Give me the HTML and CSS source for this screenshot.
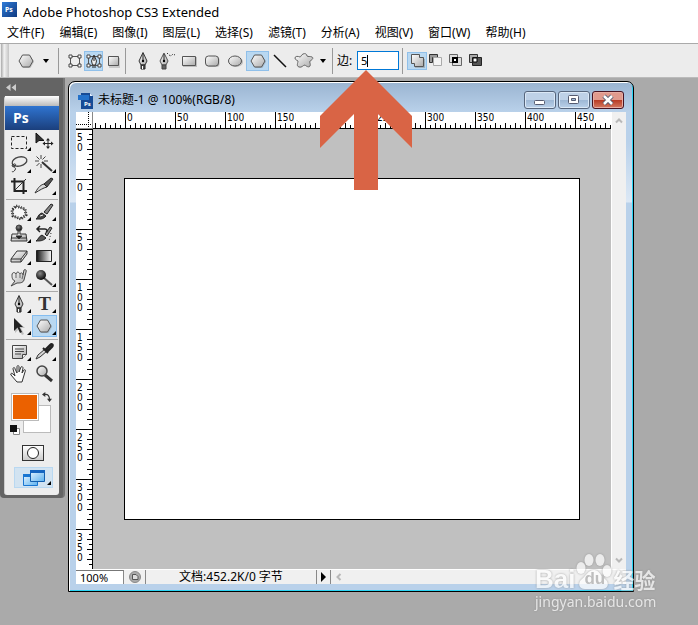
FILE: index.html
```html
<!DOCTYPE html>
<html lang="zh-CN">
<head>
<meta charset="utf-8">
<title>Adobe Photoshop CS3 Extended</title>
<link rel="stylesheet" href="styles.css">
</head>
<body>
<svg class="sprite" aria-hidden="true">
  <defs>
    <linearGradient id="metal" x1="0" y1="0" x2="1" y2="1"><stop offset="0" stop-color="#fff"/><stop offset="1" stop-color="#aaa"/></linearGradient>
    <linearGradient id="dark" x1="0" y1="0" x2="1" y2="0"><stop offset="0" stop-color="#111"/><stop offset="1" stop-color="#fff"/></linearGradient>
    <linearGradient id="blue" x1="0" y1="0" x2="1" y2="1"><stop offset="0" stop-color="#2f7bd8"/><stop offset="1" stop-color="#103a80"/></linearGradient>
    <linearGradient id="screen" x1="0" y1="0" x2="1" y2="1"><stop offset="0" stop-color="#e8f5ff"/><stop offset="1" stop-color="#5db2ef"/></linearGradient>
    <radialGradient id="ball" cx=".4" cy=".35" r=".6"><stop offset="0" stop-color="#888"/><stop offset="1" stop-color="#111"/></radialGradient>
  </defs>
  <symbol id="hex" viewBox="0 0 20 20"><path d="M6.500 4h7l3.500 6-3.500 6h-7L3 10z" fill="#888" opacity=".35" transform="translate(1 1)"/><path d="M6.500 4h7l3.500 6-3.500 6h-7L3 10z" fill="url(#metal)" stroke="#555"/></symbol>
  <symbol id="shape-layer" viewBox="0 0 20 20"><path d="M5.500 5.500h9v9h-9z" fill="#eee" stroke="#555"/><path d="M4 4h3v3H4zM13 4h3v3h-3zM4 13h3v3H4zM13 13h3v3h-3z" fill="#fff" stroke="#444"/></symbol>
  <symbol id="path-mode" viewBox="0 0 20 20"><path d="M4.500 5.500h11v9h-11z" fill="none" stroke="#555"/><path d="M3 4h3v3H3zM14 4h3v3h-3zM3 13h3v3H3zM14 13h3v3h-3z" fill="#fff" stroke="#444"/><path d="M10 4l-2.500 6 1 4h3l1-4z" fill="#eee" stroke="#333"/><path d="M10 5v5M8 16h4" stroke="#222"/></symbol>
  <symbol id="pixels" viewBox="0 0 20 20"><path d="M6 7h11v10H6z" fill="#777" opacity=".3"/><path d="M5.500 5.500h10v9h-10z" fill="url(#metal)" stroke="#555"/></symbol>
  <symbol id="pen" viewBox="0 0 20 20"><path d="M10 1.500L6 10l2 4h4l2-4z" fill="url(#metal)" stroke="#333"/><path d="M10 3v6" stroke="#222"/><circle cx="10" cy="10" r="1.200"/><path d="M8 14h4v4H8z" fill="#555" stroke="#222"/><path d="M9.500 15v3" stroke="#fff"/></symbol>
  <symbol id="free-pen" viewBox="0 0 20 20"><path d="M8 2L4 10l2 4h4l2-4z" fill="url(#metal)" stroke="#555"/><path d="M8 3v6" stroke="#222"/><circle cx="8" cy="10" r="1.200"/><path d="M6 14h4v4H6z" fill="#666" stroke="#444"/><path d="M11 2l2 2 2 1 2-2 2 1" fill="none" stroke="#333" stroke-dasharray="1.500 1.500"/></symbol>
  <symbol id="rect" viewBox="0 0 20 20"><path d="M4 6h14v10H4z" fill="#777" opacity=".4"/><path d="M3.500 5.500h13v9h-13z" fill="url(#metal)" stroke="#555"/></symbol>
  <symbol id="rrect" viewBox="0 0 20 20"><rect x="4.500" y="6" width="13" height="10" rx="3" fill="#777" opacity=".4"/><rect x="3.500" y="5" width="13" height="10" rx="3" fill="url(#metal)" stroke="#555"/></symbol>
  <symbol id="oval" viewBox="0 0 20 20"><ellipse cx="11" cy="11" rx="7" ry="5" fill="#777" opacity=".4"/><ellipse cx="10" cy="10" rx="6.500" ry="5" fill="url(#metal)" stroke="#555"/></symbol>
  <symbol id="line" viewBox="0 0 20 20"><path d="M3 4l12 12" stroke="#111" stroke-width="1.500"/></symbol>
  <symbol id="blob" viewBox="0 0 20 20"><path d="M9 3c2-1 4 0 4 2 1 1 3 0 5 1s0 3-2 4c-1 1 1 3 0 5s-4 0-5-1c-2 0-3 3-6 2s-1-4-1-6c-1-1-3-1-3-3s3-2 5-1c1 0 1-2 3-3z" fill="url(#metal)" stroke="#666"/></symbol>
  <symbol id="op-add" viewBox="0 0 20 20"><path d="M4.500 3.500h8v3h4v9h-9v-3h-3z" fill="url(#metal)" stroke="#555"/><path d="M8 16.500h9.500V8" fill="none" stroke="#888" opacity=".5"/></symbol>
  <symbol id="op-sub" viewBox="0 0 20 20"><path d="M2.500 3.500h8v3h-5v5h-3z" fill="#999" stroke="#333"/><path d="M6.500 6.500h8v8h-8z" fill="#f4f4f4" stroke="#aaa"/></symbol>
  <symbol id="op-int" viewBox="0 0 20 20"><path d="M2.500 3.500h8v8h-8zM5.500 6.500h9v8h-9z" fill="#ddd" stroke="#666"/><path d="M6 7h4v4H6z" fill="#fff" stroke="#000" stroke-width="2"/></symbol>
  <symbol id="op-xor" viewBox="0 0 20 20"><path d="M2.500 3.500h8v8h-8z" fill="#aaa" stroke="#333"/><path d="M5.500 6.500h9v8h-9z" fill="#555" stroke="#222"/><path d="M6 7h4v4H6z" fill="#fff" stroke="#000"/></symbol>
  <symbol id="marquee" viewBox="0 0 20 20"><path d="M2.500 4.500h15v12h-15z" fill="none" stroke="#222" stroke-dasharray="3 2"/></symbol>
  <symbol id="move" viewBox="0 0 20 20"><path d="M2 1v10l3-2.500h5z" fill="#333" stroke="#111"/><path d="M14 7v9M9.500 11.500h9" stroke="#222"/><path d="M14 6l-2 2.500h4zM14 17l-2-2.500h4zM8.500 11.500L11 9.500v4zM19.500 11.500L17 9.500v4z" fill="#222"/></symbol>
  <symbol id="lasso" viewBox="0 0 20 20"><ellipse cx="10.500" cy="7.500" rx="7.500" ry="4.500" transform="rotate(-14 10.500 7.500)" fill="none" stroke="#444" stroke-width="1.300"/><path d="M4 10c-2 2 0 4 2 2s-1-3-2-1 4 2 2 5-3 1-3 2" fill="none" stroke="#333"/></symbol>
  <symbol id="wand" viewBox="0 0 20 20"><path d="M8 8l10 9" stroke="#333" stroke-width="2"/><path d="M7 1v4M7 10v4M1 7h4M10 7h4M2.500 2.500l3 3M11.500 2.500l-3 3M2.500 12l3-3" stroke="#444"/></symbol>
  <symbol id="crop" viewBox="0 0 20 20"><path d="M5.500 2v13H18M2 5.500h12.500V18" fill="none" stroke="#222" stroke-width="2"/><path d="M5.500 14.500L17 3" stroke="#333"/></symbol>
  <symbol id="slice" viewBox="0 0 20 20"><path d="M1 17C5 10 7 9 10 8l3 3c-4 1-7 3-12 6z" fill="url(#metal)" stroke="#333"/><path d="M10 8l7-6 2 1-6 8z" fill="#555" stroke="#222"/></symbol>
  <symbol id="heal" viewBox="0 0 20 20"><path d="M7 4l9 3 1 6-5 4-8-3-1-6z" fill="#f6f6f6" stroke="#222" stroke-width="3" stroke-dasharray="1 1.500"/><path d="M7 4l9 3 1 6-5 4-8-3-1-6z" fill="none" stroke="#666"/></symbol>
  <symbol id="brush" viewBox="0 0 20 20"><path d="M10 10l7-8 2 1-6 9z" fill="#888" stroke="#222"/><path d="M2 17c2-1 2-5 6-6l4 3c-3 4-7 3-10 3z" fill="#444" stroke="#222"/><path d="M6 14l3-1" stroke="#eee"/></symbol>
  <symbol id="stamp" viewBox="0 0 20 20"><circle cx="10" cy="4" r="3" fill="url(#ball)" stroke="#444"/><path d="M9 7h2v3h6l1 7H2l1-7h6z" fill="url(#metal)" stroke="#333"/><path d="M2 14h16M7 12h6l-3 3z" stroke="#333" fill="#111"/></symbol>
  <symbol id="history" viewBox="0 0 20 20"><path d="M11 10l5-7 2 1-5 8z" fill="#888" stroke="#222"/><path d="M2 17c2-1 3-5 6-6l4 3c-3 3-6 3-10 3z" fill="#555" stroke="#222"/><path d="M4 5h7c2 0 3 2 1 3M6 2L3 5l3 3" fill="none" stroke="#222" stroke-width="1.500"/><path d="M17 9l-2 8" stroke="#222" stroke-dasharray="1 2"/></symbol>
  <symbol id="eraser" viewBox="0 0 20 20"><path d="M2 13l6-8h10l-6 8zM2 13v3h10v-3M12 16l6-8V5" fill="url(#metal)" stroke="#333"/></symbol>
  <symbol id="gradient" viewBox="0 0 20 20"><path d="M2.500 4.500h15v11h-15z" fill="url(#dark)" stroke="#222"/></symbol>
  <symbol id="smudge" viewBox="0 0 20 20"><path d="M2 18l4-5c-3-1-3-4-3-6 0-3 3-3 4-1 1-3 3-2 4 0 1-2 3-1 3 1l1-5c1-1 3 0 2 2l-2 8c-1 3-4 3-7 3z" fill="url(#metal)" stroke="#444"/><path d="M7 6v4M11 6v4M14 7l-1 4" stroke="#666"/></symbol>
  <symbol id="burn" viewBox="0 0 20 20"><path d="M10 10l8 7" stroke="#555" stroke-width="2"/><circle cx="7" cy="7" r="5" fill="url(#ball)"/></symbol>
  <symbol id="arrow-sel" viewBox="0 0 20 20"><path d="M5 2v14l4-4 3 6 2-1-3-6h4z" fill="#777" opacity=".4" transform="translate(1 1)"/><path d="M5 2v13l3.500-3.500L11 17l2-1-2.500-5H14z" fill="#222"/></symbol>
  <symbol id="note" viewBox="0 0 20 20"><path d="M3.500 3.500h14v9l-4 4h-10z" fill="url(#metal)" stroke="#444"/><path d="M6 7h9M6 9.500h9M6 12h6" stroke="#444"/><path d="M13.500 16.500v-4h4" fill="#eee" stroke="#444"/></symbol>
  <symbol id="dropper" viewBox="0 0 20 20"><path d="M2 17l2-4 7-6 2 2-7 6z" fill="url(#metal)" stroke="#333"/><path d="M9 6l5 5M12 7l4-4c2-2 4 0 2 2l-4 4z" fill="#333" stroke="#222" stroke-width="2"/></symbol>
  <symbol id="hand" viewBox="0 0 20 20"><path d="M8 18L2 11c-1-2 1-2 2-1l2 2-2-7c0-2 2-2 2 0l2 4V3c0-2 2-2 2 0v5l2-5c1-1 2 0 2 1l-1 5 2-3c1-1 2 0 1 2l-3 10z" fill="#fafafa" stroke="#333"/></symbol>
  <symbol id="zoom" viewBox="0 0 20 20"><path d="M11 11l7 6" stroke="#333" stroke-width="3"/><circle cx="8" cy="7" r="5" fill="url(#metal)" stroke="#444" stroke-width="1.500"/></symbol>
  <symbol id="swap" viewBox="0 0 12 12"><path d="M3 3c4-1 6 2 6 6" fill="none" stroke="#333" stroke-width="1.500"/><path d="M0 3l4-3v6zM9 12L6 8h6z" fill="#333"/></symbol>
</svg>

<header class="titlebar">
  <svg class="app-logo" viewBox="0 0 15 15" aria-hidden="true"><rect width="15" height="15" fill="url(#blue)"/><text x="3" y="10">Ps</text></svg>
  <h1>Adobe Photoshop CS3 Extended</h1>
</header>
<nav class="menubar">
  <button>文件(F)</button><button>编辑(E)</button><button>图像(I)</button><button>图层(L)</button><button>选择(S)</button><button>滤镜(T)</button><button>分析(A)</button><button>视图(V)</button><button>窗口(W)</button><button>帮助(H)</button>
</nav>

<section class="options">
  <span class="grip"></span>
  <button class="preset" aria-label="多边形工具"><svg><use href="#hex"/></svg><i class="caret"></i></button>
  <div class="group modes">
    <button aria-label="形状图层"><svg><use href="#shape-layer"/></svg></button>
    <button class="active" aria-label="路径"><svg><use href="#path-mode"/></svg></button>
    <button aria-label="填充像素"><svg><use href="#pixels"/></svg></button>
  </div>
  <div class="group shapes">
    <button aria-label="钢笔"><svg><use href="#pen"/></svg></button>
    <button aria-label="自由钢笔"><svg><use href="#free-pen"/></svg></button>
    <button aria-label="矩形"><svg><use href="#rect"/></svg></button>
    <button aria-label="圆角矩形"><svg><use href="#rrect"/></svg></button>
    <button aria-label="椭圆"><svg><use href="#oval"/></svg></button>
    <button class="active" aria-label="多边形"><svg><use href="#hex"/></svg></button>
    <button aria-label="直线"><svg><use href="#line"/></svg></button>
    <button aria-label="自定形状"><svg><use href="#blob"/></svg></button>
    <button class="drop" aria-label="形状选项"><i class="caret"></i></button>
  </div>
  <div class="group sides">
    <label for="sides">边:</label><input id="sides" type="text" value="5"><i class="text-cursor"></i>
  </div>
  <div class="group ops">
    <button class="active" aria-label="添加"><svg><use href="#op-add"/></svg></button>
    <button aria-label="减去"><svg><use href="#op-sub"/></svg></button>
    <button aria-label="交叉"><svg><use href="#op-int"/></svg></button>
    <button aria-label="重叠除外"><svg><use href="#op-xor"/></svg></button>
  </div>
</section>

<main class="workspace">
  <aside class="toolbox">
    <button class="collapse" aria-label="折叠"><svg viewBox="0 0 10 7"><path d="M4.500 0v7L0 3.500zM10 0v7L5.500 3.500z" fill="#ccc"/></svg></button>
    <div class="panel">
      <div class="panel-grip"></div>
      <div class="ps">Ps</div>
      <div class="tools">
        <button class="more" aria-label="选框"><svg><use href="#marquee"/></svg></button>
        <button aria-label="移动"><svg><use href="#move"/></svg></button>
        <button class="more" aria-label="套索"><svg><use href="#lasso"/></svg></button>
        <button class="more" aria-label="魔棒"><svg><use href="#wand"/></svg></button>
        <button aria-label="裁剪"><svg><use href="#crop"/></svg></button>
        <button class="more" aria-label="切片"><svg><use href="#slice"/></svg></button>
      </div>
      <div class="tools">
        <button class="more" aria-label="修复画笔"><svg><use href="#heal"/></svg></button>
        <button class="more" aria-label="画笔"><svg><use href="#brush"/></svg></button>
        <button class="more" aria-label="图章"><svg><use href="#stamp"/></svg></button>
        <button class="more" aria-label="历史记录画笔"><svg><use href="#history"/></svg></button>
        <button class="more" aria-label="橡皮擦"><svg><use href="#eraser"/></svg></button>
        <button class="more" aria-label="渐变"><svg><use href="#gradient"/></svg></button>
        <button class="more" aria-label="涂抹"><svg><use href="#smudge"/></svg></button>
        <button class="more" aria-label="加深"><svg><use href="#burn"/></svg></button>
      </div>
      <div class="tools">
        <button class="more" aria-label="钢笔"><svg><use href="#pen"/></svg></button>
        <button class="more type">T</button>
        <button class="more" aria-label="路径选择"><svg><use href="#arrow-sel"/></svg></button>
        <button class="more active" aria-label="多边形"><svg><use href="#hex"/></svg></button>
      </div>
      <div class="tools">
        <button class="more" aria-label="注释"><svg><use href="#note"/></svg></button>
        <button class="more" aria-label="吸管"><svg><use href="#dropper"/></svg></button>
        <button aria-label="抓手"><svg><use href="#hand"/></svg></button>
        <button aria-label="缩放"><svg><use href="#zoom"/></svg></button>
      </div>
      <div class="colors">
        <button class="bg" aria-label="背景色"></button>
        <button class="fg" aria-label="前景色"></button>
        <button class="swap" aria-label="切换颜色"><svg><use href="#swap"/></svg></button>
        <button class="reset" aria-label="默认颜色"><svg viewBox="0 0 10 10"><path d="M3.500 3.500h6v6h-6z" fill="#fff" stroke="#888"/><path d="M0 0h7v7H0z" fill="#111"/></svg></button>
      </div>
      <button class="mask" aria-label="快速蒙版"><svg viewBox="0 0 14 14"><circle cx="7" cy="7" r="5.500" fill="#fff" stroke="#222"/></svg></button>
      <button class="screen more" aria-label="屏幕模式"><svg viewBox="0 0 24 18"><path d="M1.500 5.500h14v11h-14z" fill="url(#screen)" stroke="#1976d2"/><path d="M1 5h7v3H1z" fill="#1976d2"/><path d="M8.500 1.500h14v11h-14z" fill="url(#screen)" stroke="#135fae"/><path d="M8 1h15v3H8z" fill="#1565c0"/></svg></button>
    </div>
  </aside>

  <article class="document">
    <div class="caption">
      <svg class="doc-logo" viewBox="0 0 16 17" aria-hidden="true"><path d="M3 1h9l3 3v13H3z" fill="#174b96"/><path d="M12 1v3h3z" fill="#e5f0ff"/><path d="M0 3h11v5H0z" fill="#2371ca"/><text x="6" y="14">Ps</text></svg>
      <h2>未标题-1 @ 100%(RGB/8)</h2>
      <div class="win-buttons">
        <button aria-label="最小化"><svg viewBox="0 0 30 16"><rect x="9.500" y="8.500" width="10" height="4" rx="1" fill="#fff" stroke="#555b70"/></svg></button>
        <button aria-label="最大化"><svg viewBox="0 0 30 16"><rect x="9.500" y="3.500" width="10" height="8" rx="1" fill="#fff" stroke="#555b70"/><path d="M12.500 6.500h4v2h-4z" fill="#9fb9d8" stroke="#555b70"/></svg></button>
        <button class="close" aria-label="关闭"><svg viewBox="0 0 30 16"><path d="M11 4l8 8M19 4l-8 8" stroke="#555b70" stroke-width="4.500"/><path d="M11 4l8 8M19 4l-8 8" stroke="#fff" stroke-width="2.500"/></svg></button>
      </div>
    </div>
    <div class="body">
      <div class="origin"></div>
      <ol class="ruler-x"><li>0</li><li>50</li><li>100</li><li>150</li><li>200</li><li>250</li><li>300</li><li>350</li><li>400</li><li>450</li></ol>
      <ol class="ruler-y"><li>50</li><li>0</li><li>50</li><li>100</li><li>150</li><li>200</li><li>250</li><li>300</li><li>350</li></ol>
      <div class="canvas"><div class="artboard"></div></div>
      <div class="scroll-y">
        <button aria-label="向上滚动"><svg viewBox="0 0 8 8"><path d="M1 5.500l3-3 3 3" fill="none" stroke="#b8b8b8" stroke-width="2"/></svg></button>
        <button aria-label="向下滚动"><svg viewBox="0 0 8 8"><path d="M1 2.500l3 3 3-3" fill="none" stroke="#b8b8b8" stroke-width="2"/></svg></button>
      </div>
      <footer class="status">
        <input type="text" value="100%" aria-label="缩放比例">
        <button class="info" aria-label="文档信息"><svg viewBox="0 0 12 12"><circle cx="6" cy="6" r="5.500" fill="#aaa" stroke="#888"/><path d="M3.500 8.500v-5H7l2 2v3z" fill="#ddd" stroke="#555"/></svg></button>
        <span class="size">文档:452.2K/0 字节</span>
        <button class="menu" aria-label="状态菜单"><svg viewBox="0 0 6 10"><path d="M0 0v10l5-5z"/></svg></button>
        <button class="left" aria-label="向左滚动"><svg viewBox="0 0 8 8"><path d="M5.500 1l-3 3 3 3" fill="none" stroke="#b8b8b8" stroke-width="2"/></svg></button>
      </footer>
    </div>
  </article>
</main>

<svg class="pointer" viewBox="0 0 92 120" aria-hidden="true"><path d="M46 0l46 46v32L58 44v76H34V44L0 78V46z" fill="#d96445"/></svg>

<div class="watermark">
  <div class="brand"><span>Bai</span><span class="paw"><svg viewBox="0 0 36 36" aria-hidden="true"><ellipse cx="5" cy="15" rx="4.500" ry="6"/><ellipse cx="13" cy="7" rx="4.500" ry="6"/><ellipse cx="24" cy="7" rx="4.500" ry="6"/><ellipse cx="31" cy="18" rx="4.500" ry="6"/><path d="M18 17c5 0 6 5 11 9 5 4 3 10-3 10H9c-6 0-8-6-3-10 4-3 6-9 12-9z"/></svg><b>du</b></span><span class="cn">经验</span></div>
  <div class="site">jingyan.baidu.com</div>
</div>
</body>
</html>
```
FILE: styles.css
```css
* { box-sizing: border-box; }
body {
  margin: 0;
  min-height: 100vh;
  display: flex;
  flex-direction: column;
  position: relative;
  overflow: hidden;
  background: #fff;
  color: #000;
  font: 12px/16px "Noto Sans", "Noto Sans CJK SC", sans-serif;
}
button, input {
  font: inherit;
  color: inherit;
  margin: 0;
  padding: 0;
  border: 0;
  background: none;
  border-radius: 0;
}
button { display: flex; align-items: center; justify-content: center; }
h1, h2, ol { margin: 0; padding: 0; font-weight: 400; list-style: none; }
svg { display: block; flex: none; }
.sprite { position: absolute; width: 0; height: 0; }

.titlebar { display: flex; align-items: center; gap: 6px; height: 23px; padding: 0 2px; }
.titlebar h1 { font: 13px/16px "Noto Sans", sans-serif; }
.app-logo { width: 15px; height: 15px; margin-bottom: 4px; }
.app-logo text, .doc-logo text { font: bold 7px "Noto Sans", sans-serif; fill: #fff; }
.menubar { display: flex; gap: 15px; height: 20px; padding: 0 7px; }

.options {
  display: flex;
  align-items: center;
  height: 34px;
  background: #ececec;
  border-top: 1px solid #aaa;
}
.options svg { width: 20px; height: 20px; }
.grip { align-self: stretch; width: 8px; margin-left: 1px; background: linear-gradient(90deg, #aaa, #f2f2f2 40%, #c4c4c4); }
.preset { width: 49px; padding-left: 7px; gap: 7px; justify-content: flex-start; }
.caret { border: 3px solid transparent; border-top: 4px solid #000; border-bottom: 0; }
.group { display: flex; align-items: center; height: 26px; border-left: 1px solid #999; }
.group .active { background: #b9d8f1; outline: 1px solid #90c0ea; outline-offset: -1px; }
.modes { width: 67px; padding-left: 6px; }
.modes button { width: 19px; height: 20px; }
.shapes { width: 207px; padding-left: 5px; }
.shapes button { width: 23px; height: 20px; }
.shapes .drop { width: 16px; }
.sides { position: relative; width: 70px; padding-left: 4px; gap: 5px; }
.sides label { width: 15px; white-space: nowrap; }
.sides input { width: 42px; height: 19px; border: 1px solid #0078d7; background: #fff; padding-left: 3px; font-size: 11px; }
.text-cursor { position: absolute; left: 34px; top: 7px; width: 1px; height: 12px; background: #000; }
.ops { padding-left: 4px; }
.ops button { width: 20px; height: 18px; }

.workspace {
  flex: 1;
  display: flex;
  align-items: flex-start;
  background: #aaa;
  border-top: 1px solid #bbb;
}
.toolbox {
  width: 65px;
  padding: 0 4px 3px;
  background: #646464;
  border-right: 2px solid #777;
  border-radius: 0 0 4px 4px;
}
.collapse { width: 14px; height: 18px; }
.collapse svg { width: 10px; height: 7px; }
.panel { background: #ededed; border-left: 1px solid #ccc; padding-bottom: 7px; border-radius: 3px; }
.panel-grip { height: 10px; background: linear-gradient(#fff, #bbb); }
.ps {
  height: 24px;
  padding-left: 8px;
  background: linear-gradient(#2f74d0, #1b3f7c);
  color: #fff;
  font: bold 14px/24px "Open Sans", sans-serif;
}
.tools { display: grid; grid-template-columns: 25px 25px; padding: 1px 0 2px 1px; margin: 0 1px; }
.tools + .tools { border-top: 1px solid #aaa; }
.tools button { position: relative; height: 22px; }
.tools svg { width: 20px; height: 20px; margin-right: 1px; }
.tools .active { background: #b9d8f1; outline: 1px solid #84bdf0; outline-offset: -1px; }
.more { position: relative; }
.more::after {
  content: "";
  position: absolute;
  right: 1px;
  bottom: 2px;
  border: 2px solid #000;
  border-top-color: transparent;
  border-left-color: transparent;
}
.tools .type { font: bold 19px/22px "Liberation Serif", serif; color: #333; }
.colors { position: relative; height: 48px; margin: 5px 0 5px; }
.fg, .bg { position: absolute; width: 28px; height: 28px; border: 1px solid #bbb; }
.fg { left: 6px; top: 1px; background: #eb6100; box-shadow: inset 0 0 0 1px #fff; }
.bg { left: 18px; top: 13px; background: #fff; }
.swap { position: absolute; left: 37px; top: 0; }
.swap svg { width: 10px; height: 10px; }
.reset { position: absolute; left: 5px; top: 33px; }
.reset svg { width: 10px; height: 10px; }
.mask { width: 22px; height: 16px; margin: 0 auto 6px 17px; border: 1px solid #333; background: linear-gradient(#fff, #ccc); }
.mask svg { width: 14px; height: 14px; }
.screen { width: 39px; height: 21px; margin-left: 9px; background: #d2e3f1; border: 1px solid #b9d8f1; }
.screen svg { width: 24px; height: 18px; }

.document {
  flex: 1;
  align-self: stretch;
  display: flex;
  flex-direction: column;
  min-width: 0;
  margin: 3px 64px 33px 3px;
  padding: 0 6px 6px;
  border: 1px solid #000;
  border-radius: 7px 7px 0 0;
  background: linear-gradient(#9ab4d1, #b9d1ea 30px, #b9d1ea 60px, #dce8f5 120px, #b9d1ea 121px);
  box-shadow: inset 1px 1px #fff, inset -1px -1px #2ad4f4;
}
.document > * { margin: 0 1px; }
.caption { display: flex; align-items: center; height: 30px; padding: 6px 2px 0 2px; gap: 4px; }
.caption h2 { font-size: 12px; flex: 1; }
.doc-logo { width: 16px; height: 17px; }
.doc-logo text { font-size: 6px; }
.win-buttons { display: flex; gap: 2px; }
.win-buttons button { width: 32px; height: 18px; border: 1px solid #56657c; border-radius: 3px; box-shadow: inset 0 0 0 1px #dbe8f6; background: linear-gradient(#bed1e7 50%, #9db7d4 50%, #bad1ea); }
.win-buttons svg { width: 30px; height: 16px; }
.win-buttons .close { border-color: #471321; box-shadow: inset 0 0 0 1px #e7ada4; background: linear-gradient(#e09a8d 50%, #b83923 50%, #d47a62); }
.body {
  flex: 1;
  display: grid;
  grid-template: 17px 1fr 15px / 17px 1fr 15px;
  margin-bottom: 1px;
  min-width: 0;
  min-height: 0;
}
.origin {
  background:
    linear-gradient(90deg, #000 1px, transparent 1px) 0 12px / 2px 1px repeat-x,
    linear-gradient(#000 1px, transparent 1px) 12px 0 / 1px 2px repeat-y,
    #fff;
  border-right: 1px solid #888;
  border-bottom: 1px solid #888;
}
.ruler-x, .ruler-y { font: 10px/10px "DejaVu Sans Condensed", "Noto Sans", sans-serif; overflow: hidden; }
.ruler-x {
  display: flex;
  padding-left: 32px;
  min-width: 0;
  border-bottom: 1px solid #000;
  background:
    linear-gradient(90deg, #000 1px, transparent 1px) 2px 100% / 10px 5px repeat-x,
    linear-gradient(90deg, #000 1px, transparent 1px) 7px 100% / 10px 3px repeat-x,
    #fff;
}
.ruler-x li { flex: none; width: 50px; padding: 1px; border-left: 1px solid #000; }
.ruler-y {
  height: 0;
  min-height: 100%;
  border-right: 1px solid #000;
  background:
    linear-gradient(#000 1px, transparent 1px) 100% 0 / 5px 10px repeat-y,
    linear-gradient(#000 1px, transparent 1px) 100% 5px / 3px 10px repeat-y,
    #fff;
}
.ruler-y li { height: 50px; padding: 3px 8px 0 1px; border-top: 1px solid #000; word-break: break-all; }
.canvas { display: flex; padding: 49px 31px; background: #c0c0c0; }
.artboard { flex: 1; background: #fff; border: 1px solid #000; }
.scroll-y { grid-row: 1 / 3; grid-column: 3; display: flex; flex-direction: column; justify-content: space-between; align-items: center; padding: 5px 0; background: #f0f0f0; border-left: 1px solid #fff; }
.scroll-y svg, .left svg { width: 8px; height: 8px; }
.status { grid-column: 1 / -1; display: flex; background: #f0f0f0; border-top: 1px solid #fff; line-height: 14px; }
.status > * { border-right: 1px solid #888; }
.status input { width: 48px; padding-left: 4px; background: #fff; border-top: 1px solid #777; font-size: 11px; }
.status .info { width: 22px; }
.info svg { width: 12px; height: 12px; }
.size { width: 171px; text-align: center; white-space: nowrap; }
.status .menu { width: 14px; }
.menu svg { width: 6px; height: 10px; }
.status .left { width: 16px; border: 0; }

.pointer { position: absolute; left: 320px; top: 70px; width: 92px; height: 120px; }
.watermark { position: absolute; right: 38px; bottom: 14px; width: 125px; color: #fff; opacity: .7; filter: drop-shadow(0 0 1px #888); }
.brand { display: flex; align-items: flex-end; height: 41px; font: bold 26px/26px "Liberation Sans", sans-serif; }
.paw { position: relative; margin: 0 1px; }
.paw svg { width: 36px; height: 36px; margin: 0 0 3px; fill: #fff; }
.paw b { position: absolute; left: 8px; bottom: 0; font-size: 17px; color: #aaa; }
.cn { font: bold 21px/26px "Noto Sans CJK SC", sans-serif; }
.site { font: 14px/19px "Noto Sans", sans-serif; white-space: nowrap; }
```
